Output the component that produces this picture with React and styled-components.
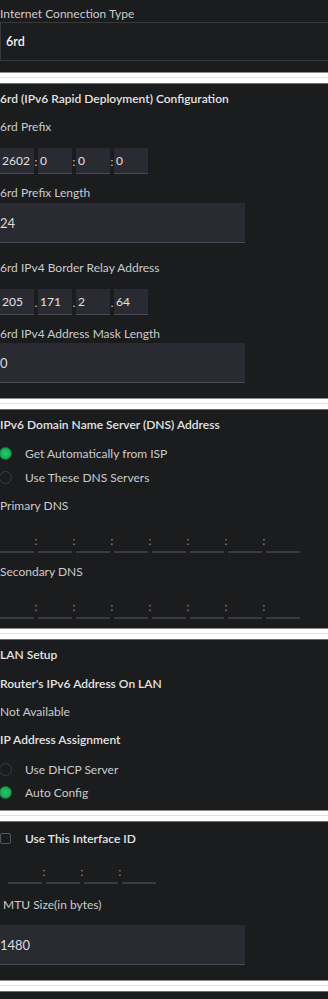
import React from "react";
import styled, { createGlobalStyle } from "styled-components";

const GlobalStyle = createGlobalStyle`
  html, body {
    margin: 0;
    padding: 0;
    background: #f4f4f4;
  }
  body {
    font-family: Lato, "Open Sans", "Liberation Sans", sans-serif;
    -webkit-font-smoothing: antialiased;
  }
`;

const Page = styled.div`
  width: 328px;
  min-height: 999px;
  display: flex;
  flex-direction: column;
  overflow: hidden;
`;

const Panel = styled.section`
  background: #1b1c1e;
  display: flex;
  flex-direction: column;
  padding: ${(p) => p.$pad || "6px 0 10px"};
  flex-grow: ${(p) => (p.$grow ? 1 : 0)};
`;

const Divider = styled.div`
  height: 10px;
  background: linear-gradient(#ffffff 0, #ffffff 4px, #e2e2e2 4px, #e2e2e2 5px, #ffffff 5px);
  border-top: 1px solid #8d8d8d;
  border-bottom: 1px solid #6c6c6c;
`;

const Label = styled.div`
  height: 16px;
  line-height: 16px;
  font-size: 12px;
  color: ${(p) => (p.$strong ? "#e4e4e4" : "#cbcbcb")};
  font-weight: ${(p) => (p.$strong ? 600 : 400)};
  margin-top: ${(p) => p.$mt || 0}px;
  padding-left: ${(p) => p.$indent || 0}px;
  white-space: nowrap;
`;

const SelectBox = styled.div`
  height: 37px;
  margin-right: -3px;
  border: 1px solid #38393b;
  background: #1c1d1f;
  display: flex;
  align-items: center;
  padding-left: 5px;
  font-size: 12.5px;
  font-weight: 600;
  color: #f2f2f2;
`;

const WideInput = styled.div`
  width: 245px;
  height: 39px;
  margin-top: ${(p) => p.$mt || 0}px;
  background: #2a2a32;
  border-bottom: 1px solid #4a4a53;
  display: flex;
  align-items: center;
  font-size: 13px;
  color: #dcdcdc;
`;

const SegRow = styled.div`
  display: flex;
  align-items: stretch;
  height: 26px;
  margin-top: ${(p) => p.$mt || 0}px;
  padding-left: ${(p) => p.$indent || 0}px;
`;

const Seg = styled.div`
  width: 34px;
  box-sizing: border-box;
  background: ${(p) => (p.$filled ? "#2a2a32" : "transparent")};
  border-bottom: ${(p) => (p.$filled ? "1px solid #4a4a53" : "2px solid #3a3b3e")};
  display: flex;
  align-items: center;
  padding-left: 2px;
  font-size: 12px;
  color: #e2e2e2;
`;

const Sep = styled.span`
  width: 4px;
  display: flex;
  align-items: center;
  justify-content: center;
  font-size: 11px;
  color: ${(p) => (p.$dim ? "#9a9a9a" : "#d8d8d8")};
`;

const OptionRow = styled.div`
  display: flex;
  align-items: center;
  height: 16px;
  margin-top: ${(p) => p.$mt || 0}px;
  font-size: 12px;
  color: ${(p) => (p.$strong ? "#e4e4e4" : "#cbcbcb")};
  font-weight: ${(p) => (p.$strong ? 600 : 400)};
`;

const Radio = styled.span`
  width: 13px;
  height: 13px;
  box-sizing: border-box;
  border-radius: 50%;
  margin-left: -1px;
  margin-right: 13px;
  flex-shrink: 0;
  border: 1px solid ${(p) => (p.$on ? "#0f7d3f" : "#3b3c3f")};
  background: ${(p) =>
    p.$on ? "radial-gradient(circle, #25c86a 0, #1cb05a 55%, #13803f 100%)" : "#1b1c1e"};
`;

const Checkbox = styled.span`
  width: 11px;
  height: 11px;
  box-sizing: border-box;
  border-radius: 2px;
  border: 1px solid #55565a;
  margin-right: 14px;
  flex-shrink: 0;
`;

function Segments({ values, sep, count, filled, indent, mt }) {
  const items = [];
  for (let i = 0; i < count; i++) {
    if (i > 0) items.push(<Sep key={"s" + i} $dim={!filled}>{sep}</Sep>);
    items.push(
      <Seg key={i} $filled={filled}>
        {values ? values[i] : ""}
      </Seg>
    );
  }
  return (
    <SegRow $indent={indent} $mt={mt}>
      {items}
    </SegRow>
  );
}

export default function App() {
  return (
    <Page>
      <GlobalStyle />
      <Panel $pad="6px 0 11px">
        <Label>Internet Connection Type</Label>
        <SelectBox>6rd</SelectBox>
      </Panel>
      <Divider />
      <Panel $pad="7px 0 15px">
        <Label $strong>6rd (IPv6 Rapid Deployment) Configuration</Label>
        <Label $mt={12}>6rd Prefix</Label>
        <Segments values={["2602", "0", "0", "0"]} sep=":" count={4} filled mt={13} />
        <Label $mt={11}>6rd Prefix Length</Label>
        <WideInput $mt={2}>24</WideInput>
        <Label $mt={17}>6rd IPv4 Border Relay Address</Label>
        <Segments values={["205", "171", "2", "64"]} sep="." count={4} filled mt={13} />
        <Label $mt={11}>6rd IPv4 Address Mask Length</Label>
        <WideInput $mt={1}>0</WideInput>
      </Panel>
      <Divider />
      <Panel $pad="7px 0 9px">
        <Label $strong>IPv6 Domain Name Server (DNS) Address</Label>
        <OptionRow $mt={12}>
          <Radio $on />
          Get Automatically from ISP
        </OptionRow>
        <OptionRow $mt={8}>
          <Radio />
          Use These DNS Servers
        </OptionRow>
        <Label $mt={13}>Primary DNS</Label>
        <Segments sep=":" count={8} mt={13} />
        <Label $mt={11}>Secondary DNS</Label>
        <Segments sep=":" count={8} mt={13} />
      </Panel>
      <Divider />
      <Panel $pad="7px 0 10px">
        <Label $strong>LAN Setup</Label>
        <Label $strong $mt={13}>Router's IPv6 Address On LAN</Label>
        <Label $mt={12}>Not Available</Label>
        <Label $strong $mt={12}>IP Address Assignment</Label>
        <OptionRow $mt={13}>
          <Radio />
          Use DHCP Server
        </OptionRow>
        <OptionRow $mt={7}>
          <Radio $on />
          Auto Config
        </OptionRow>
      </Panel>
      <Divider />
      <Panel $pad="8px 0 15px">
        <OptionRow $strong>
          <Checkbox />
          Use This Interface ID
        </OptionRow>
        <Segments sep=":" count={4} indent={8} mt={12} />
        <Label $mt={13} $indent={3}>MTU Size(in bytes)</Label>
        <WideInput $mt={12}>1480</WideInput>
      </Panel>
      <Divider />
      <Panel $grow $pad="0" />
    </Page>
  );
}
